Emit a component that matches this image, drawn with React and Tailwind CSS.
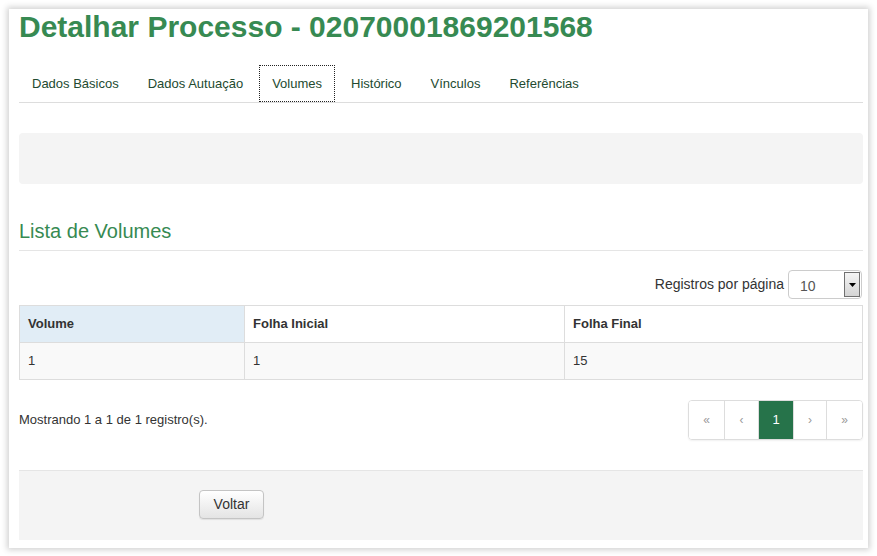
import { useState } from 'react';

const tabs = ['Dados Básicos', 'Dados Autuação', 'Volumes', 'Histórico', 'Vínculos', 'Referências'];

const volumes = [{ volume: '1', inicial: '1', final: '15' }];

const PageButton = ({ children, active, className = '' }) => (
  <span
    className={
      'flex items-center justify-center h-full border-l border-[#ddd] first:border-l-0 ' +
      (active ? 'bg-[#26734a] text-white text-[13px]' : 'bg-white text-[#9a9a9a] text-[12px]') +
      ' ' +
      className
    }
  >
    {children}
  </span>
);

const App = () => {
  const [activeTab] = useState('Volumes');

  return (
    <div className="min-h-[556px] bg-white pt-[9px] px-[9px] font-['Liberation_Sans',Arial,sans-serif] text-[#333]">
      <div className="h-[539px] bg-white shadow-[0_0_6px_2px_rgba(0,0,0,0.18)] pl-[10px] pr-[5px]">
        {/* Título */}
        <h1 className="pt-[3px] text-[30px] leading-[30px] font-bold text-[#378a52]">
          Detalhar Processo - 02070001869201568
        </h1>

        {/* Abas */}
        <div className="mt-[23px] flex border-b border-[#ddd]">
          {tabs.map((tab) => (
            <span
              key={tab}
              className={
                'mr-[3px] px-[12px] py-[9px] text-[13px] leading-[17px] text-[#234a30] border ' +
                (tab === activeTab ? 'border-dotted border-[#222]' : 'border-transparent')
              }
            >
              {tab}
            </span>
          ))}
        </div>

        {/* Filtros */}
        <div className="mt-[30px] h-[51px] rounded-[4px] bg-[#f4f4f4]" />

        {/* Lista */}
        <h2 className="mt-[36px] pb-[8px] text-[20px] leading-[22px] text-[#378a52] border-b border-[#e5e5e5]">
          Lista de Volumes
        </h2>

        <div className="mt-[19px] flex items-center justify-end gap-[4px] pr-[1px]">
          <span className="text-[14px] text-[#333]">Registros por página</span>
          <div className="flex h-[29px] w-[74px] items-stretch rounded-[4px] border border-[#ccc] bg-white">
            <span className="flex-1 pl-[11px] pt-[5px] text-[14px] text-[#555]">10</span>
            <span className="my-[1px] mr-[1px] flex w-[16px] items-center justify-center border border-[#707070] bg-gradient-to-b from-[#f4f4f4] to-[#d4d4d4]">
              <svg width="7" height="4" viewBox="0 0 7 4">
                <path d="M0 0h7L3.5 4z" fill="#000" />
              </svg>
            </span>
          </div>
        </div>

        <table className="mt-[6px] w-full border-collapse text-[13px]">
          <thead>
            <tr>
              <th className="w-[225px] border border-[#ddd] bg-[#e1edf6] px-[8px] py-[9px] text-left leading-[18px] font-bold">
                Volume
              </th>
              <th className="w-[320px] border border-[#ddd] bg-white px-[8px] py-[9px] text-left leading-[18px] font-bold">
                Folha Inicial
              </th>
              <th className="border border-[#ddd] bg-white px-[8px] py-[9px] text-left leading-[18px] font-bold">
                Folha Final
              </th>
            </tr>
          </thead>
          <tbody>
            {volumes.map((v) => (
              <tr key={v.volume} className="bg-[#f9f9f9]">
                <td className="border border-[#ddd] px-[8px] py-[9px] leading-[18px]">{v.volume}</td>
                <td className="border border-[#ddd] px-[8px] py-[9px] leading-[18px]">{v.inicial}</td>
                <td className="border border-[#ddd] px-[8px] py-[9px] leading-[18px]">{v.final}</td>
              </tr>
            ))}
          </tbody>
        </table>

        <div className="mt-[20px] flex items-center justify-between">
          <span className="text-[13px]">Mostrando 1 a 1 de 1 registro(s).</span>
          <div className="flex h-[40px] overflow-hidden rounded-[4px] border border-[#ddd] shadow-[0_1px_2px_rgba(0,0,0,0.06)]">
            <PageButton className="w-[35px]">«</PageButton>
            <PageButton className="w-[34px]">‹</PageButton>
            <PageButton active className="w-[35px]">1</PageButton>
            <PageButton className="w-[33px]">›</PageButton>
            <PageButton className="w-[36px]">»</PageButton>
          </div>
        </div>

        {/* Rodapé */}
        <div className="mt-[30px] h-[70px] border-t border-[#e5e5e5] bg-[#f4f4f4] pl-[180px] pt-[19px]">
          <button className="h-[29px] w-[65px] rounded-[4px] border border-[#c4c4c4] bg-gradient-to-b from-white to-[#e4e4e4] text-[14px] text-[#333] shadow-[0_1px_1px_rgba(0,0,0,0.08)]">
            Voltar
          </button>
        </div>
      </div>
    </div>
  );
};

export default App;
